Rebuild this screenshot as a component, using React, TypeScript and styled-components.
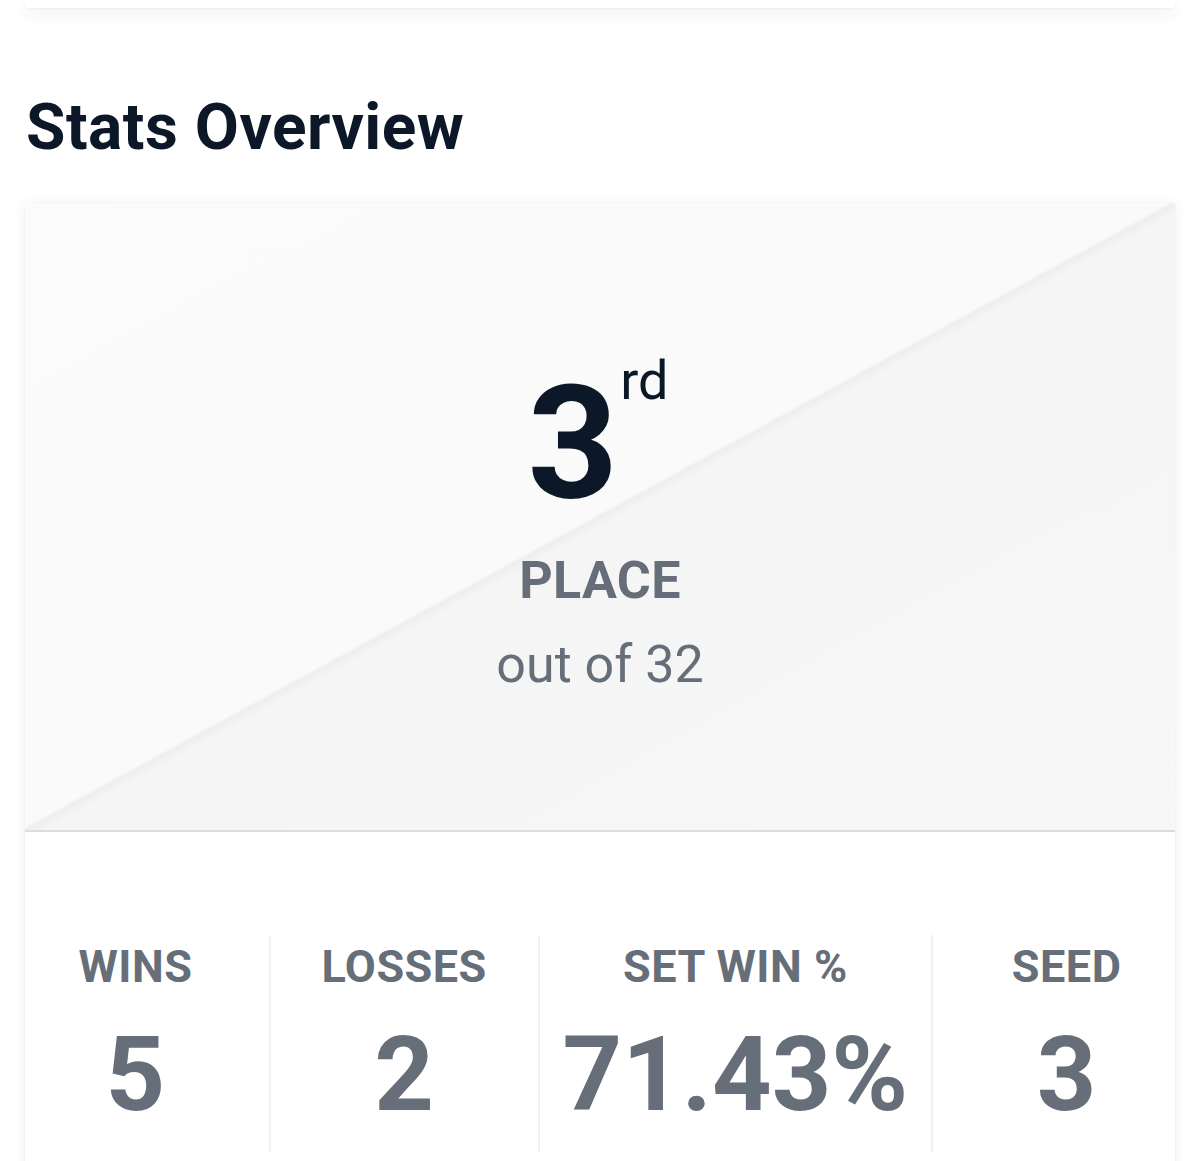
import React from "react";
import styled, { createGlobalStyle } from "styled-components";

const GlobalStyle = createGlobalStyle`
  html, body {
    margin: 0;
    padding: 0;
    background: #ffffff;
    overflow: hidden;
  }
  body {
    font-family: Roboto, "Noto Sans", "Liberation Sans", sans-serif;
    -webkit-font-smoothing: antialiased;
  }
  * { box-sizing: border-box; }
`;

const Page = styled.div`
  padding: 0 25px;
`;

const PrevCard = styled.div`
  height: 8px;
  background: #ffffff;
  border-radius: 0 0 4px 4px;
  box-shadow: 0 6px 16px rgba(0, 0, 0, 0.07), 0 1px 3px rgba(0, 0, 0, 0.05);
`;

const Heading = styled.h2`
  margin: 82px 0 37px 1px;
  font-size: 64px;
  line-height: 76px;
  font-weight: 700;
  color: #0c1727;
  letter-spacing: 0.5px;
`;

const Card = styled.section`
  background: #ffffff;
  box-shadow: 0 2px 14px rgba(0, 0, 0, 0.07), 0 0 2px rgba(0, 0, 0, 0.05);
  border-radius: 2px;
`;

const Hero = styled.div`
  display: flex;
  flex-direction: column;
  align-items: center;
  padding: 161px 0 134px;
  border-bottom: 2px solid #dadde3;
  background: linear-gradient(
    to bottom right,
    #fbfbfb 0%,
    #fafafa 49.7%,
    #eeeeee 50%,
    #f5f5f5 50.8%,
    #f7f7f7 100%
  );
`;

const Rank = styled.div`
  display: flex;
  align-items: flex-start;
  color: #0c1727;
  margin-right: 4px;
`;

const RankNumber = styled.span`
  font-size: 158px;
  line-height: 158px;
  font-weight: 700;
`;

const RankSuffix = styled.span`
  font-size: 54px;
  line-height: 54px;
  font-weight: 400;
  margin: -10px 0 0 2px;
`;

const PlaceLabel = styled.div`
  margin-top: 28px;
  font-size: 52px;
  line-height: 62px;
  font-weight: 700;
  color: #666e79;
  letter-spacing: 0.3px;
`;

const OutOf = styled.div`
  margin-top: 22px;
  font-size: 52px;
  line-height: 62px;
  font-weight: 400;
  color: #666e79;
`;

const StatsArea = styled.div`
  padding: 103px 0 20px;
`;

const StatsGrid = styled.div`
  display: grid;
  grid-template-columns: 1fr 1fr auto 1fr;
  margin: 0 -25px;
`;

const Stat = styled.div<{ $divider?: boolean }>`
  display: flex;
  flex-direction: column;
  align-items: center;
  padding: 5px 23px 15px;
  border-left: ${(p) => (p.$divider ? "2px solid #f1f1f2" : "2px solid transparent")};
`;

const StatLabel = styled.div`
  font-size: 45px;
  line-height: 53px;
  font-weight: 700;
  color: #666e79;
  letter-spacing: 0.5px;
  white-space: nowrap;
`;

const StatValue = styled.div`
  margin-top: 19px;
  font-size: 104px;
  line-height: 125px;
  font-weight: 700;
  color: #666e79;
  white-space: nowrap;
`;

const stats = [
  { label: "WINS", value: "5" },
  { label: "LOSSES", value: "2" },
  { label: "SET WIN %", value: "71.43%" },
  { label: "SEED", value: "3" },
];

export default function App() {
  return (
    <>
      <GlobalStyle />
      <Page>
        <PrevCard />
        <Heading>Stats Overview</Heading>
        <Card>
          <Hero>
            <Rank>
              <RankNumber>3</RankNumber>
              <RankSuffix>rd</RankSuffix>
            </Rank>
            <PlaceLabel>PLACE</PlaceLabel>
            <OutOf>out of 32</OutOf>
          </Hero>
          <StatsArea>
            <StatsGrid>
              {stats.map((s, i) => (
                <Stat key={s.label} $divider={i > 0}>
                  <StatLabel>{s.label}</StatLabel>
                  <StatValue>{s.value}</StatValue>
                </Stat>
              ))}
            </StatsGrid>
          </StatsArea>
        </Card>
      </Page>
    </>
  );
}
